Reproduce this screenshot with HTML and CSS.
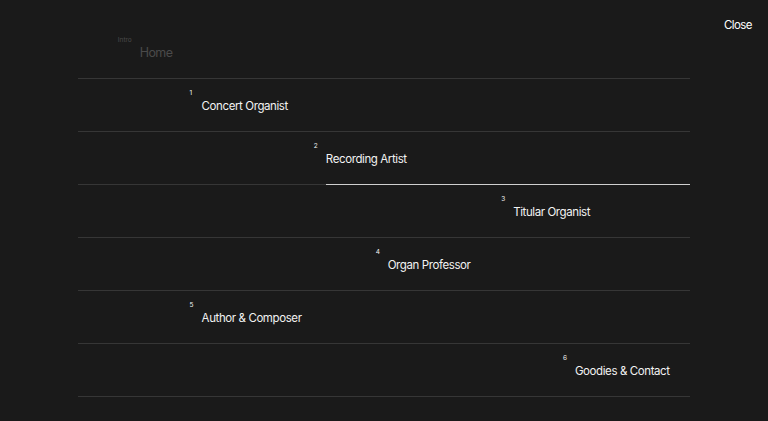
FILE: index.html
```html
<!DOCTYPE html>
<html lang="en">
<head>
<meta charset="utf-8">
<title>Menu</title>
<link rel="stylesheet" href="styles.css">
</head>
<body>
<div class="page">
  <button class="close">Close</button>
  <nav class="menu">
    <div class="row home off-10">
      <a class="item"><span class="num">Intro</span><span class="label">Home</span></a>
    </div>
    <div class="row off-20">
      <a class="item"><span class="num">1</span><span class="label">Concert Organist</span></a>
    </div>
    <div class="row active off-40">
      <a class="item"><span class="num">2</span><span class="label">Recording Artist</span></a>
    </div>
    <div class="row off-70">
      <a class="item"><span class="num">3</span><span class="label">Titular Organist</span></a>
    </div>
    <div class="row off-50">
      <a class="item"><span class="num">4</span><span class="label">Organ Professor</span></a>
    </div>
    <div class="row off-20">
      <a class="item"><span class="num">5</span><span class="label">Author &amp; Composer</span></a>
    </div>
    <div class="row off-80">
      <a class="item"><span class="num">6</span><span class="label">Goodies &amp; Contact</span></a>
    </div>
  </nav>
</div>
</body>
</html>
```
FILE: styles.css
```css
html, body {
  margin: 0;
  padding: 0;
  background: #1a1a1a;
}
body {
  font-family: Inter, "Liberation Sans", sans-serif;
  color: #f2f2f2;
  width: 768px;
  height: 421px;
  overflow: hidden;
}
.page {
  position: relative;
  height: 421px;
  padding-top: 26px;
  box-sizing: border-box;
}
.close {
  position: absolute;
  top: 18px;
  right: 16px;
  background: none;
  border: 0;
  padding: 0;
  color: #ffffff;
  font-family: inherit;
  font-size: 11.5px;
  letter-spacing: -0.05em;
  line-height: 14px;
}
.menu {
  margin: 0 78px;
  display: flex;
  flex-direction: column;
}
.row {
  height: 52px;
  border-bottom: 1px solid #363636;
  display: flex;
}
.off-10 { padding-left: 10.1%; }
.off-20 { padding-left: 20.2%; }
.off-40 { padding-left: 40.5%; }
.off-50 { padding-left: 50.6%; }
.off-70 { padding-left: 71.1%; }
.off-80 { padding-left: 81.2%; }
.item {
  flex: 1;
  display: flex;
  align-items: center;
  padding-top: 2px;
  margin-bottom: -1px;
  border-bottom: 1px solid transparent;
}
.row.active .item {
  border-bottom-color: #cfcfcf;
}
.num {
  font-size: 6.5px;
  width: 12px;
  margin-left: -12px;
  margin-top: -26px;
  line-height: 8px;
  color: #f2f2f2;
}
.label {
  font-size: 11.5px;
  letter-spacing: -0.035em;
  line-height: 14px;
}
.home .num {
  width: 22px;
  margin-left: -22px;
  color: #4a4a4a;
}
.home .label {
  color: #4a4a4a;
  font-size: 12.5px;
  letter-spacing: -0.05em;
}
```
